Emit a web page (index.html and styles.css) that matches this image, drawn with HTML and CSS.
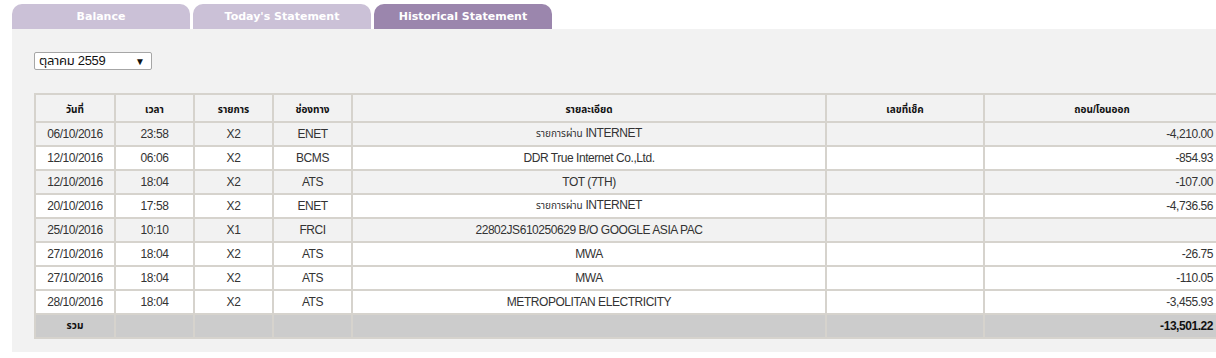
FILE: index.html
```html
<!DOCTYPE html>
<html lang="th">
<head>
<meta charset="utf-8">
<title>Historical Statement</title>
<link rel="stylesheet" href="styles.css">
</head>
<body>
<div class="page">
  <div class="tabs">
    <div class="tab">Balance</div>
    <div class="tab">Today's Statement</div>
    <div class="tab active">Historical Statement</div>
  </div>
  <div class="panel">
    <div class="select"><span class="select-text">ตุลาคม 2559</span><span class="select-arrow">▼</span></div>
    <table class="stmt">
      <colgroup>
        <col class="c-date"><col class="c-time"><col class="c-type"><col class="c-chan"><col class="c-desc"><col class="c-cheque"><col class="c-amt">
      </colgroup>
      <thead>
        <tr><th>วันที่</th><th>เวลา</th><th>รายการ</th><th>ช่องทาง</th><th>รายละเอียด</th><th>เลขที่เช็ค</th><th>ถอน/โอนออก</th></tr>
      </thead>
      <tbody>
        <tr class="gray"><td>06/10/2016</td><td>23:58</td><td>X2</td><td>ENET</td><td><span class="th">รายการผ่าน</span> INTERNET</td><td></td><td class="amt">-4,210.00</td></tr>
        <tr><td>12/10/2016</td><td>06:06</td><td>X2</td><td>BCMS</td><td>DDR True Internet Co.,Ltd.</td><td></td><td class="amt">-854.93</td></tr>
        <tr class="gray"><td>12/10/2016</td><td>18:04</td><td>X2</td><td>ATS</td><td>TOT (7TH)</td><td></td><td class="amt">-107.00</td></tr>
        <tr><td>20/10/2016</td><td>17:58</td><td>X2</td><td>ENET</td><td><span class="th">รายการผ่าน</span> INTERNET</td><td></td><td class="amt">-4,736.56</td></tr>
        <tr class="gray"><td>25/10/2016</td><td>10:10</td><td>X1</td><td>FRCI</td><td>22802JS610250629 B/O GOOGLE ASIA PAC</td><td></td><td class="amt"></td></tr>
        <tr><td>27/10/2016</td><td>18:04</td><td>X2</td><td>ATS</td><td>MWA</td><td></td><td class="amt">-26.75</td></tr>
        <tr><td>27/10/2016</td><td>18:04</td><td>X2</td><td>ATS</td><td>MWA</td><td></td><td class="amt">-110.05</td></tr>
        <tr><td>28/10/2016</td><td>18:04</td><td>X2</td><td>ATS</td><td>METROPOLITAN ELECTRICITY</td><td></td><td class="amt">-3,455.93</td></tr>
      </tbody>
      <tfoot>
        <tr><td class="total-label">รวม</td><td></td><td></td><td></td><td></td><td></td><td class="amt total">-13,501.22</td></tr>
      </tfoot>
    </table>
  </div>
</div>
</body>
</html>
```

FILE: styles.css
```css
html, body {
  margin: 0;
  padding: 0;
  background: #ffffff;
  overflow: hidden;
}

.page {
  width: 1240px;
  padding: 4px 0 0 12px;
  font-family: "Liberation Sans", Arial, "Noto Sans Thai", sans-serif;
  color: #333333;
}

.tabs {
  display: flex;
  gap: 3px;
  height: 25px;
}

.tab {
  width: 178px;
  height: 25px;
  line-height: 26px;
  text-align: center;
  background: #cbc1d7;
  color: #ffffff;
  font-family: "DejaVu Sans", Verdana, sans-serif;
  font-weight: bold;
  font-size: 11px;
  border-radius: 10px 10px 0 0;
}

.tab.active {
  background: #9b86ad;
}

.panel {
  background: #f2f2f2;
  padding: 23px 0 13px 22px;
}

.select {
  display: flex;
  align-items: center;
  justify-content: space-between;
  box-sizing: border-box;
  width: 118px;
  height: 18px;
  padding: 0 6px 0 4px;
  border: 1px solid #a6a6a6;
  border-radius: 2px;
  background: #ffffff;
  color: #111111;
  font-size: 13px;
}

.select-text {
  letter-spacing: -0.3px;
}

.select-arrow {
  font-size: 10px;
  color: #111111;
}

.stmt {
  margin-top: 23px;
  width: 1185px;
  table-layout: fixed;
  border-collapse: collapse;
  font-size: 12px;
  letter-spacing: -0.45px;
}

.c-date { width: 80px; }
.c-time { width: 79px; }
.c-type { width: 79px; }
.c-chan { width: 79px; }
.c-desc { width: 474px; }
.c-cheque { width: 158px; }
.c-amt { width: 236px; }

.stmt th,
.stmt td {
  border: 2px solid #d6d3cd;
  text-align: center;
  padding: 0 6px;
  white-space: nowrap;
}

.stmt th {
  height: 23px;
  padding-top: 3px;
  background: #f2f2f2;
  color: #111111;
  font-size: 10px;
  font-weight: bold;
  letter-spacing: 0;
}

.stmt td {
  height: 22px;
  background: #ffffff;
}

.stmt tr.gray td {
  background: #f2f2f2;
}

.stmt .th {
  font-size: 10px;
  letter-spacing: 0;
}

.stmt td.amt {
  text-align: right;
}

.stmt tfoot td {
  background: #cccccc;
  color: #111111;
  font-weight: bold;
}

.stmt tfoot td.total-label {
  font-size: 10px;
  letter-spacing: 0;
}
```
